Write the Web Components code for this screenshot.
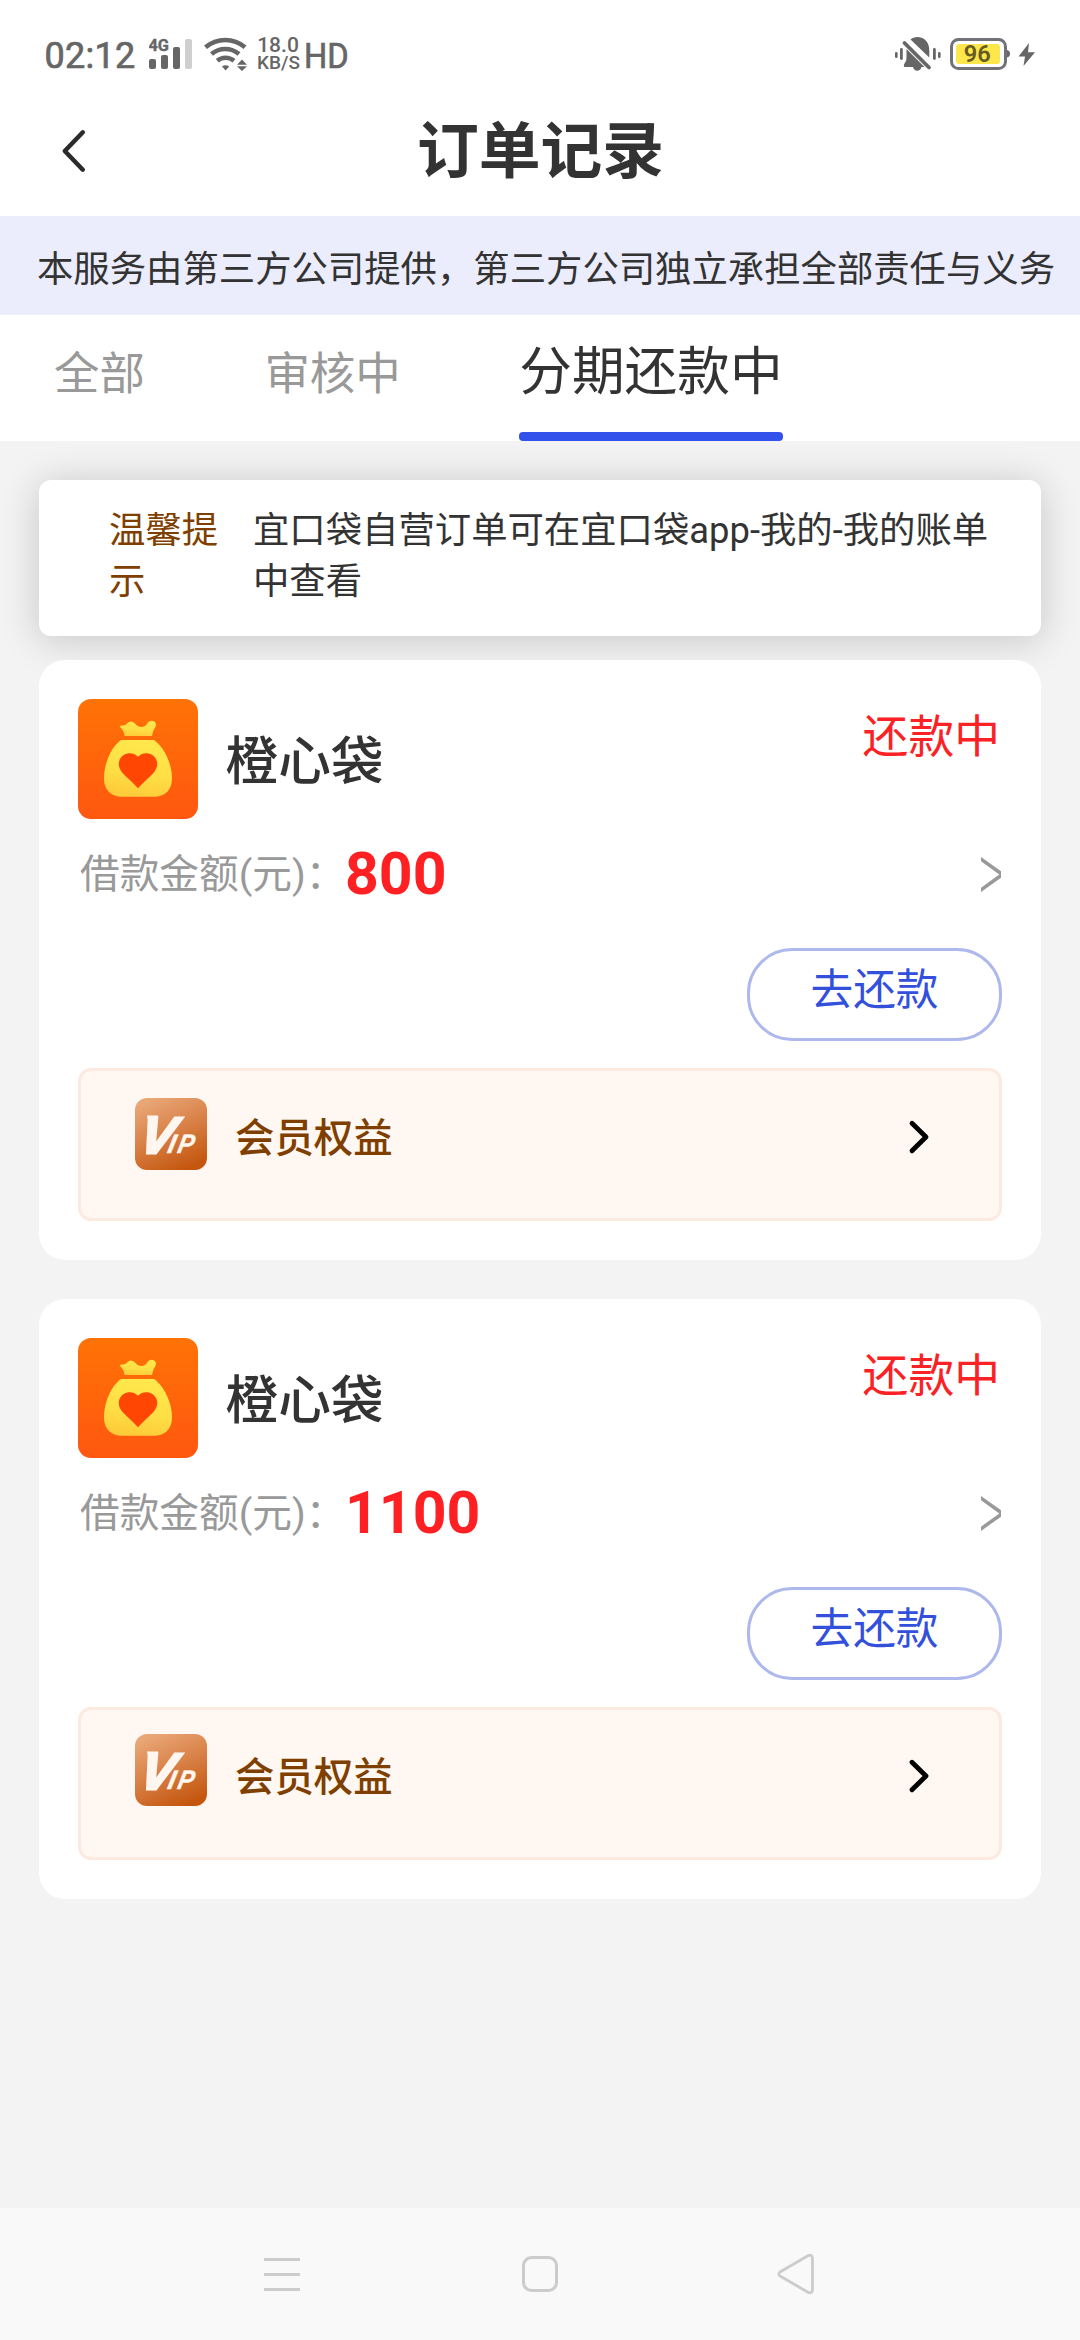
<!DOCTYPE html>
<html lang="zh-CN">
<head>
<meta charset="utf-8">
<title>订单记录</title>
<style>
html,body{margin:0;padding:0}
body{width:1080px;height:2340px;overflow:hidden;background:#f3f3f3;color:#333;font-family:Roboto,"Noto Sans CJK SC",sans-serif}
</style>
</head>
<body>
<order-page></order-page>
<script>
function define(name, html) {
  const t = document.createElement('template');
  t.innerHTML = html;
  customElements.define(name, class extends HTMLElement {
    constructor() {
      super();
      this.attachShadow({ mode: 'open' }).appendChild(t.content.cloneNode(true));
    }
  });
}

define('status-bar', `
<style>
:host{display:flex;height:87px;box-sizing:border-box;padding:0 44px 0 44.5px;color:#666;background:#fff;align-items:flex-start}
svg{display:block;flex:none}
.time,.hd{font-size:36px;line-height:42px;margin-top:34.5px;white-space:nowrap;-webkit-text-stroke:.7px #666}
.time{width:104.5px;letter-spacing:.3px}
.signal{margin-right:12px}
.speed{width:42px;margin-left:10px;margin-top:36px;font-size:19px;line-height:18px;font-weight:500;text-align:center;white-space:nowrap}
.speed span{display:block}
.speed .n{font-size:21px}
.hd{margin-left:5px;font-size:35.5px;transform:scaleX(.92);transform-origin:0 50%}
.grow{flex:1}
svg text{font-family:Roboto,sans-serif}
</style>
<span class="time">02:12</span>
<svg class="signal" width="43" height="87" viewBox="149 0 43 87"><text x="148.5" y="51" font-size="17" font-weight="700" fill="#666" stroke="#666" stroke-width=".4" textLength="20.5" lengthAdjust="spacingAndGlyphs">4G</text><g fill="#666"><rect x="149" y="59" width="7" height="10" rx="2"/><rect x="161" y="55" width="7" height="14" rx="2"/><rect x="173" y="47" width="7" height="22" rx="2"/></g><rect x="185" y="39" width="7" height="30" rx="2" fill="#cfcfcf"/></svg>
<svg width="43" height="87" viewBox="204 0 43 87"><g fill="none" stroke="#666" stroke-width="4.6"><path d="M205.5 47.2C217 37.5 233.5 37.5 245 47.2"/><path d="M211.5 54C219.5 47.300 231 47.300 239 54"/><path d="M217.300 60.800C222 56.800 229 56.800 234 60.800"/></g><path d="M222 66.500C224 64.800 227 64.800 229.200 66.500L225.600 70.600Z" fill="#666"/><path d="M242 59.500L247 64.800H237ZM242 71L237 66.300H247Z" fill="#666"/></svg>
<div class="speed"><span class="n">18.0</span><span>KB/S</span></div>
<span class="hd">HD</span>
<span class="grow"></span>
<svg width="142" height="87" viewBox="894 0 142 87"><g fill="#666"><rect x="895" y="52" width="2.600" height="6" rx="1.300"/><rect x="900" y="48" width="2.800" height="12" rx="1.400"/><rect x="933" y="48" width="2.800" height="12" rx="1.400"/><rect x="938" y="52" width="2.600" height="6" rx="1.300"/><path d="M910.500 39.500C913.500 36.500 921 36 925 39.800C928.500 43 929.300 47 929.300 51V57.500Z"/><path d="M906.500 49L924.500 67H921.500C920.500 72 914 72 913 67H905C903.500 67 903.700 64.500 904.500 63.500C906 61.500 906.500 60 906.500 57Z"/></g><path d="M904.500 43L929 67.500" stroke="#666" stroke-width="3.800" stroke-linecap="round"/>
<path d="M908 40.800L931 63.800" stroke="#fff" stroke-width="2.200"/>
<rect x="951.500" y="39.500" width="54" height="29" rx="7" fill="#fff" stroke="#707278" stroke-width="3"/><path d="M1007 50C1011 50.500 1011 57 1007 57.500Z" fill="#666"/><rect x="956" y="44" width="44" height="20" rx="3" fill="#fee74c"/><text x="963.700" y="62.200" font-size="23.500" font-weight="600" fill="#665b20" textLength="27" lengthAdjust="spacingAndGlyphs">96</text><path d="M1029 43L1018.500 56.500H1025L1023.500 66L1035 52.300H1028Z" fill="#666"/></svg>`);

define('page-header', `
<style>
:host{display:grid;grid-template-columns:160px 1fr 160px;height:129px;background:#fff;align-items:center}
svg{display:block;margin-left:56px}
h1{margin:0;text-align:center;font-size:61.8px;line-height:80px;font-weight:700;color:#333;padding-top:0;padding-left:1px}
</style>
<svg width="34" height="129" viewBox="56 87 34 129"><path d="M82.800 132.300L64.800 151L82.800 169.700" fill="none" stroke="#2b2b2b" stroke-width="4.500" stroke-linecap="round" stroke-linejoin="round"/></svg>
<h1><slot></slot></h1>`);

define('notice-strip', `
<style>
:host{display:block;height:99px;box-sizing:border-box;padding:24px 0 0 37px;background:#ebedfc;color:#333;font-size:36.36px;line-height:60px;white-space:nowrap}
</style><slot></slot>`);

define('filter-tab', `
<style>
:host{display:flex;flex-direction:column;height:126px;box-sizing:border-box;padding-top:30px;font-size:45.45px;line-height:60px;color:#999;white-space:nowrap}
:host([active]){font-size:52.7px;color:#333;padding-top:26.500px}
i{display:none;margin-top:auto;height:9px;border-radius:4px;background:#3352eb}
:host([active]) i{display:block}
</style><span><slot></slot></span><i></i>`);

define('filter-tabs', `
<style>
:host{display:flex;height:126px;background:#fff;padding-left:54px;gap:119.500px}
::slotted([active]){margin-left:-1px}
</style><slot></slot>`);

define('tip-card', `
<style>
:host{display:flex;height:156px;box-sizing:border-box;padding:24.5px 50px 0 70px;border-radius:12px;background:#fff;box-shadow:0 4px 39px rgba(0,0,0,.19);font-size:36.36px;line-height:51px}
.label{width:112px;color:#7f3f00;margin-right:32px;flex:none}
.text{width:738px;color:#333}
</style><div class="label"><slot name="label"></slot></div><div class="text"><slot></slot></div>`);

define('app-logo', `
<style>:host{display:block;width:120px;height:120px}svg{display:block}</style>
<svg width="120" height="120" viewBox="0 0 120 120"><defs><linearGradient id="o" x1="0" y1="0" x2="0" y2="1"><stop stop-color="#ff7305"/><stop offset="1" stop-color="#ff5710"/></linearGradient><linearGradient id="y" x1=".6" y1="0" x2=".4" y2="1"><stop stop-color="#ffe84c"/><stop offset=".6" stop-color="#ffde45"/><stop offset="1" stop-color="#fdca38"/></linearGradient></defs><rect width="120" height="120" rx="13" fill="url(#o)"/><path d="M41.500 27.500C44 25.500 46 27.500 48.500 25C51.500 21.500 54.500 21.500 57.500 25C60 28.500 66 29.500 69 25C71 21.500 74 21 76.500 22.800C79 25 78 27.500 76.500 29.500C75 32 74.500 34.500 74 37H46.500C46.200 33 44.500 30 41.500 27.500Z" fill="url(#y)"/><path d="M43 41H76C85.500 47.500 94 64 94 79.500C94 91 87 97.700 76 97.700H44C33 97.700 26 91 26 79.500C26 64 33.500 47.500 43 41Z" fill="url(#y)"/><path d="M60 57.700C54.500 52 45.500 53.500 42 60C39.500 65 41 70 45 74.500C49.500 79 55 83.500 60 89.200C65 83.500 70.500 79 75 74.500C79 70 80.500 65 78 60C74.500 53.500 65.500 52 60 57.700Z" fill="#ff4703"/></svg>`);

define('vip-badge', `
<style>:host{display:block;width:72px;height:72px;flex:none}svg{display:block}text{font-style:italic;font-weight:700;fill:#fff7ef;stroke:#fff7ef;stroke-linejoin:miter}</style>
<svg width="72" height="72" viewBox="0 0 72 72"><defs><linearGradient id="g" x1=".25" y1="0" x2=".7" y2="1"><stop stop-color="#e9a777"/><stop offset=".5" stop-color="#d87f45"/><stop offset="1" stop-color="#c4560e"/></linearGradient></defs><rect width="72" height="72" rx="12" fill="url(#g)"/><text transform="translate(0 54.500) skewX(-12)" y="0" font-family="Liberation Sans"><tspan x="2.500" font-size="51" stroke-width="2.800">V</tspan><tspan x="31.500" font-size="27" stroke-width=".4">I</tspan><tspan x="41.500" font-size="27" stroke-width=".4" textLength="16" lengthAdjust="spacingAndGlyphs">P</tspan></text><path d="M12 17.500H23V21.500H13Z" fill="#fff7ef"/></svg>`);

define('vip-row', `
<style>
:host{display:flex;height:153px;box-sizing:border-box;border:3px solid #fce9df;border-radius:13px;background:#fff7f1;padding:27px 67px 0 54px}
:host([raised]) vip-badge{margin-top:-3px}
.t{margin-left:28px;padding-top:11px;font-size:39.400px;line-height:60px;font-weight:500;color:#7f3f00}
.arrow{display:block;margin:21px 0 0 auto}
</style>
<vip-badge></vip-badge><span class="t"><slot></slot></span>
<svg class="arrow" width="26" height="36" viewBox="906 1119 26 36"><path d="M912 1123.200L926 1137L912 1150.800" fill="none" stroke="#000" stroke-width="4.800" stroke-linecap="round" stroke-linejoin="round"/></svg>`);

define('pay-button', `
<style>
:host{display:block;width:255px;height:93px;box-sizing:border-box;border:3px solid #adb8ec;border-radius:45px;padding-top:9px;text-align:center;font-size:42.700px;line-height:60px;color:#3350dd;background:#fff}
</style><slot></slot>`);

define('order-card', `
<style>
:host{display:flex;flex-direction:column;height:600px;box-sizing:border-box;padding:39px;border-radius:26px;background:#fff;position:relative}
.head{display:flex;height:120px}
.name{margin-left:27.500px;padding-top:33px;font-size:52.700px;line-height:60px;font-weight:500;color:#333}
.state{margin:9px 2px 0 auto;font-size:45.800px;line-height:60px;color:#fa2224}
.amount{display:flex;height:61px;margin-top:25px;line-height:60px;padding-left:2px;white-space:nowrap}
.label{font-size:39.700px;color:#999;padding-top:1px;width:265px}
.value{font-size:59px;font-weight:700;color:#fe2022;margin-top:0}
.amount svg{display:block;margin-left:auto;margin-right:1px}
pay-button{margin:43px 0 27px auto;flex:none}
</style>
<div class="head"><app-logo></app-logo><span class="name"><slot name="name"></slot></span><span class="state"><slot name="state"></slot></span></div>
<div class="amount"><span class="label">借款金额(元)：</span><span class="value"><slot name="amount"></slot></span><svg width="20" height="61" viewBox="0 0 20 61"><path d="M-1 14.500L20 29.500V31.500L-1 46.500" fill="none" stroke="#999" stroke-width="3.500"/></svg></div>
<pay-button>去还款</pay-button>
<slot name="extra"></slot>`);

define('system-nav', `
<style>:host{display:flex;height:132px;background:#f9f9f9;justify-content:space-between;padding:0 264px;align-items:center}svg{display:block}.home{margin-left:4px}</style>
<svg width="36" height="44" viewBox="264 2252 36 44"><path d="M264 2259.500H300M264 2274.500H300M264 2289.500H300" stroke="#ccc" stroke-width="3"/></svg>
<svg class="home" width="40" height="44" viewBox="520 2252 40 44"><rect x="523.500" y="2257.500" width="33" height="33" rx="8" fill="none" stroke="#ccc" stroke-width="3"/></svg>
<svg width="40" height="44" viewBox="776 2252 40 44"><path d="M780 2272L807.500 2256Q812.500 2253.500 812.500 2259V2289Q812.500 2294.500 807.500 2292L780 2276Q777.500 2274 780 2272Z" fill="none" stroke="#ccc" stroke-width="2.800" stroke-linejoin="round"/></svg>`);

define('order-page', `
<style>
:host{display:flex;flex-direction:column;width:1080px;height:2340px;background:#f3f3f3}
main{flex:1;display:flex;flex-direction:column;padding:39px 39px 0;overflow:hidden}
order-card{margin-top:24px;flex:none}
order-card+order-card{margin-top:39px}
</style>
<status-bar></status-bar>
<page-header>订单记录</page-header>
<notice-strip>本服务由第三方公司提供，第三方公司独立承担全部责任与义务</notice-strip>
<filter-tabs><filter-tab>全部</filter-tab><filter-tab>审核中</filter-tab><filter-tab active>分期还款中</filter-tab></filter-tabs>
<main>
<tip-card><span slot="label">温馨提示</span>宜口袋自营订单可在宜口袋app-我的-我的账单中查看</tip-card>
<order-card><span slot="name">橙心袋</span><span slot="state">还款中</span><span slot="amount">800</span><vip-row slot="extra">会员权益</vip-row></order-card>
<order-card><span slot="name">橙心袋</span><span slot="state">还款中</span><span slot="amount">1100</span><vip-row slot="extra" raised>会员权益</vip-row></order-card>
</main>
<system-nav></system-nav>`);
</script>
</body>
</html>
